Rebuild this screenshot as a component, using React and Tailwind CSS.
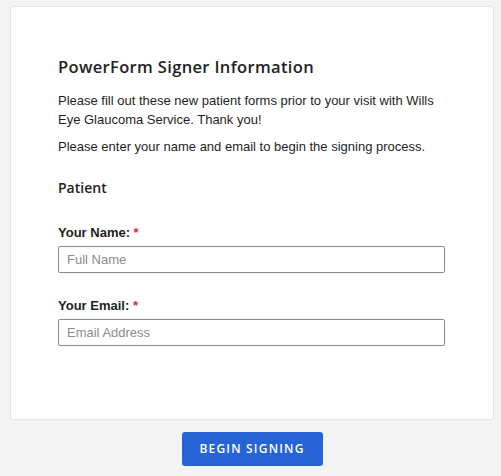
import React, { useState } from 'react'

const App = () => {
  const [name, setName] = useState("")
  const [email, setEmail] = useState("")

  return (
    <div className='min-h-screen bg-[#f3f3f3] pl-[10px] pr-[7px] pt-[6px] flex flex-col items-center' style={{ fontFamily: '"Liberation Sans", Arial, sans-serif' }}>
      <div className='w-full bg-white border border-[#e3e3e3] rounded-[4px] pl-[47px] pr-[48px] pt-[50px] h-[414px]'>
        <div className="text-[16.5px] font-semibold text-[#222] leading-[20px] tracking-[0.35px]" style={{ fontFamily: '"Open Sans", sans-serif' }}>
          PowerForm Signer Information
        </div>
        <p className='mt-[14px] text-[13px] leading-[19px] text-[#1e1e1e]'>
          Please fill out these new patient forms prior to your visit with Wills Eye Glaucoma Service. Thank you!
        </p>
        <p className='mt-[8px] text-[13px] leading-[19px] text-[#1e1e1e]'>
          Please enter your name and email to begin the signing process.
        </p>
        <div className='mt-[22px] text-[14px] font-semibold text-[#222] leading-[20px]' style={{ fontFamily: '"Open Sans", sans-serif' }}>
          Patient
        </div>
        <div className='mt-[27px]'>
          <label className='block text-[13px] font-bold text-[#1e1e1e] leading-[16px]'>
            Your Name: <span className='text-[#d0312d]'>*</span>
          </label>
          <input type="text" placeholder='Full Name'
            className='mt-[5px] w-full h-[27px] border border-[#8a8a8a] rounded-[2px] px-[8px] text-[13px] outline-none placeholder:text-[#8c8c8c]'
            value={name} onChange={(e) => setName(e.target.value)} />
        </div>
        <div className='mt-[25px]'>
          <label className='block text-[13px] font-bold text-[#1e1e1e] leading-[16px]'>
            Your Email: <span className='text-[#d0312d]'>*</span>
          </label>
          <input type="email" placeholder='Email Address'
            className='mt-[5px] w-full h-[27px] border border-[#8a8a8a] rounded-[2px] px-[8px] text-[13px] outline-none placeholder:text-[#8c8c8c]'
            value={email} onChange={(e) => setEmail(e.target.value)} />
        </div>
      </div>
      <button className='mt-[12px] w-[141px] h-[34px] bg-[#2563d7] text-white text-[12px] font-semibold tracking-[1.2px] rounded-[3px]' style={{ fontFamily: '"Open Sans", sans-serif' }}>
        BEGIN SIGNING
      </button>
    </div>
  )
}

export default App
